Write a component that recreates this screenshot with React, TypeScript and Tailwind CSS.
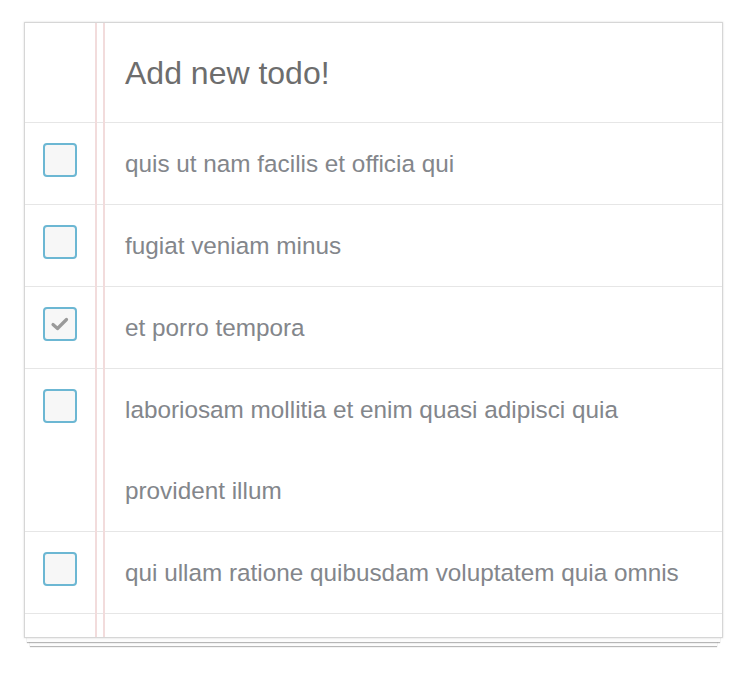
import React from 'react';

const todos = [
  { title: 'quis ut nam facilis et officia qui', done: false },
  { title: 'fugiat veniam minus', done: false },
  { title: 'et porro tempora', done: true },
  { title: 'laboriosam mollitia et enim quasi adipisci quia provident illum', done: false },
  { title: 'qui ullam ratione quibusdam voluptatem quia omnis', done: false },
];

function Checkbox({ checked }: { checked: boolean }) {
  return (
    <div className="mt-[20px] ml-[18px] flex h-[34px] w-[34px] items-center justify-center rounded-[4px] border-2 border-[#6cb7d3] bg-[#f7f7f7]">
      {checked && (
        <svg width="20" height="16" viewBox="0 0 20 16" fill="none">
          <path d="M3 8.5 L7.5 12.5 L16.5 3.5" stroke="#9a9a9a" strokeWidth="3.2" strokeLinecap="round" strokeLinejoin="round" />
        </svg>
      )}
    </div>
  );
}

export default function App() {
  return (
    <div className="min-h-[676px] bg-white pt-[22px] font-['Liberation_Sans',Arial,sans-serif]">
      <div className="relative ml-[24px] w-[699px] border border-[#d6d6d6] bg-white shadow-[0_0_2px_rgba(0,0,0,0.15),0_7px_0_-3px_#fcfcfc,0_8px_1px_-3px_rgba(0,0,0,0.28),0_14px_0_-6px_#fcfcfc,0_15px_1px_-6px_rgba(0,0,0,0.28)]">
        <div className="absolute top-0 bottom-0 left-[70px] w-[1.5px] bg-[#f2dcdc]" />
        <div className="absolute top-0 bottom-0 left-[78px] w-[1.5px] bg-[#f2dcdc]" />

        <div className="flex h-[100px] items-center border-b border-[#e6e6e6]">
          <div className="w-[100px] shrink-0" />
          <div className="text-[32px] text-[#6d6d6d]">Add new todo!</div>
        </div>

        {todos.map((t, i) => (
          <div key={i} className="flex border-b border-[#e6e6e6]">
            <div className="w-[100px] shrink-0">
              <Checkbox checked={t.done} />
            </div>
            <div className="pr-[30px] text-[24.3px] leading-[81px] text-[#83868b]">{t.title}</div>
          </div>
        ))}

        <div className="h-[23px]" />
      </div>
    </div>
  );
}
